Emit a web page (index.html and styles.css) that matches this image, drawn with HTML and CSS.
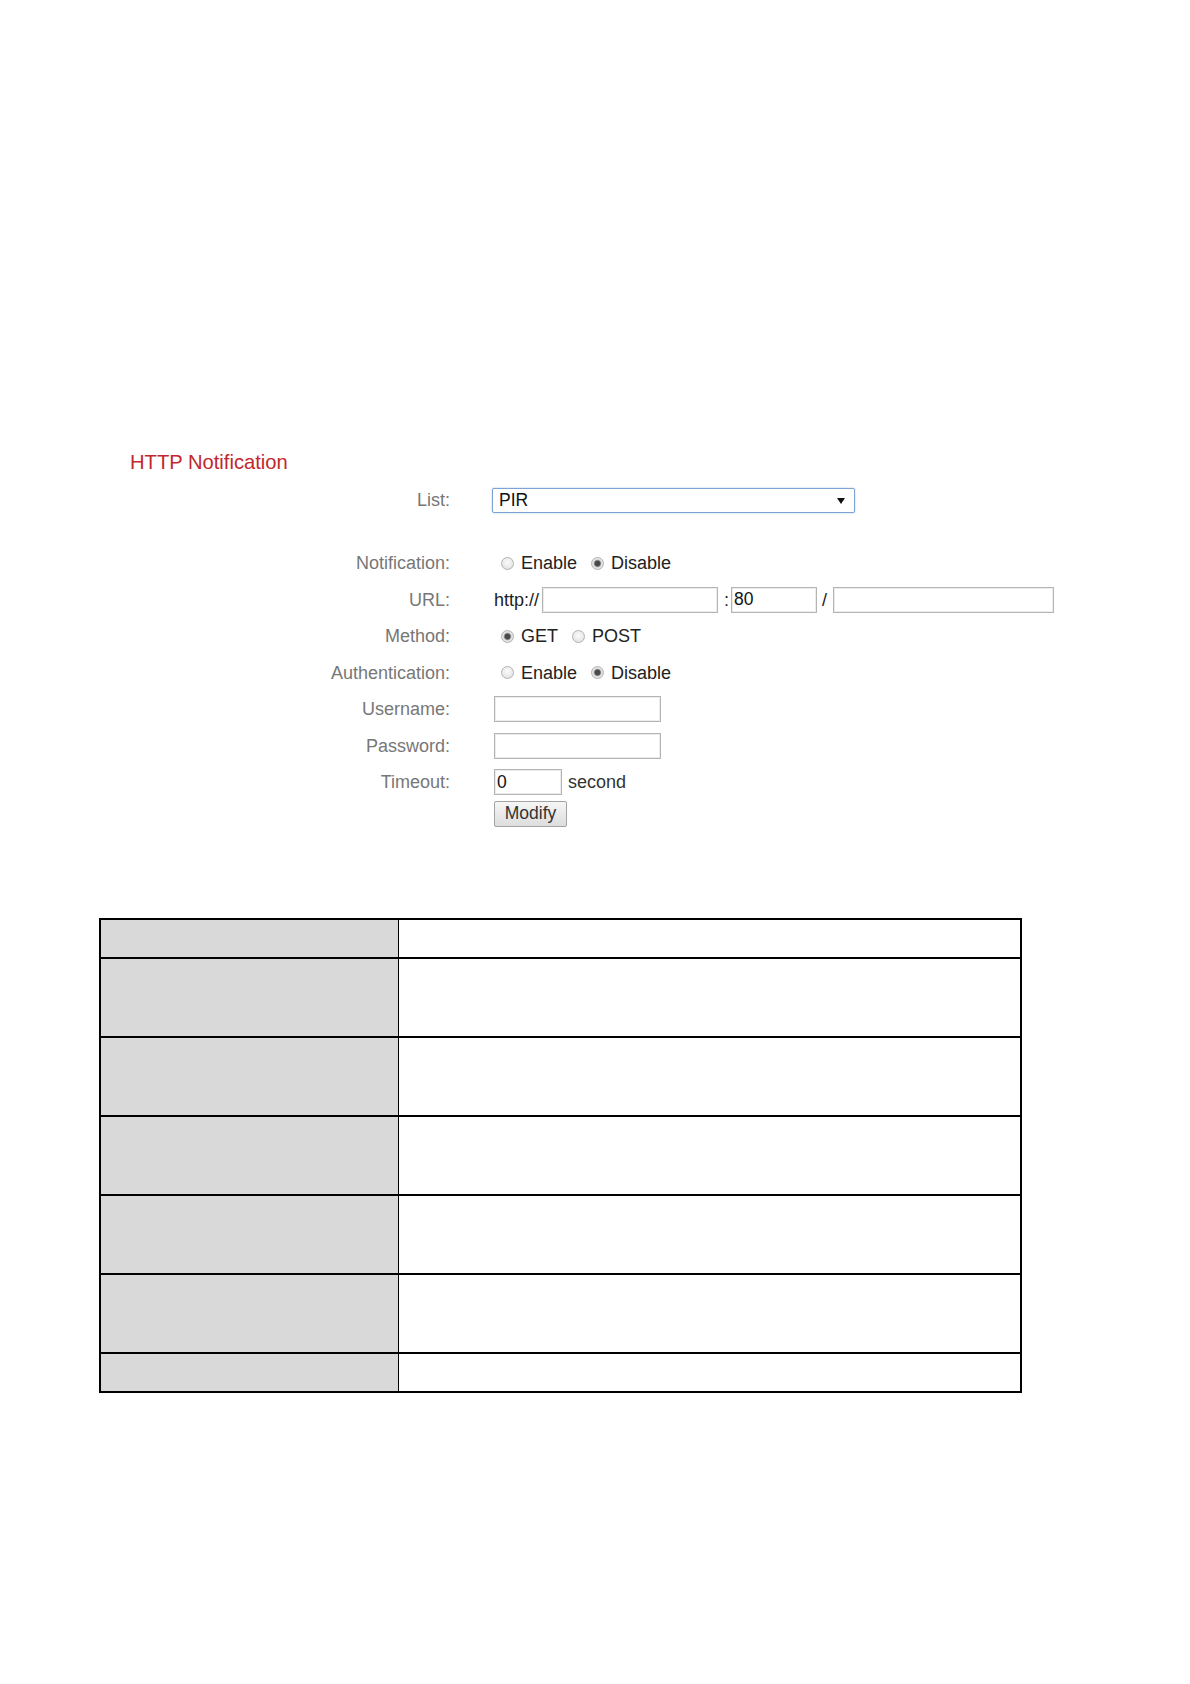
FILE: index.html
```html
<!DOCTYPE html>
<html lang="en">
<head>
<meta charset="utf-8">
<title>HTTP Notification</title>
<link rel="stylesheet" href="styles.css">
</head>
<body>
<main class="page">
  <section class="notify">
    <h2 class="notify-title">HTTP Notification</h2>
    <div class="form">
      <div class="row row-list">
        <span class="lbl">List:</span>
        <div class="val">
          <span class="select-wrap">
            <select class="select"><option>PIR</option></select>
          </span>
        </div>
      </div>

      <div class="row row-first">
        <span class="lbl">Notification:</span>
        <div class="val opts">
          <label class="opt"><input type="radio" class="radio" name="notif"> Enable</label>
          <label class="opt"><input type="radio" class="radio" name="notif" checked> Disable</label>
        </div>
      </div>

      <div class="row">
        <span class="lbl">URL:</span>
        <div class="val url">
          <span class="txt">http://</span>
          <input type="text" class="field field-host">
          <span class="txt sep-colon">:</span>
          <input type="text" class="field field-port" value="80">
          <span class="txt sep-slash">/</span>
          <input type="text" class="field field-path">
        </div>
      </div>

      <div class="row">
        <span class="lbl">Method:</span>
        <div class="val opts">
          <label class="opt"><input type="radio" class="radio" name="method" checked> GET</label>
          <label class="opt"><input type="radio" class="radio" name="method"> POST</label>
        </div>
      </div>

      <div class="row">
        <span class="lbl">Authentication:</span>
        <div class="val opts">
          <label class="opt"><input type="radio" class="radio" name="auth"> Enable</label>
          <label class="opt"><input type="radio" class="radio" name="auth" checked> Disable</label>
        </div>
      </div>

      <div class="row">
        <span class="lbl">Username:</span>
        <div class="val"><input type="text" class="field field-user"></div>
      </div>

      <div class="row">
        <span class="lbl">Password:</span>
        <div class="val"><input type="password" class="field field-user"></div>
      </div>

      <div class="row">
        <span class="lbl">Timeout:</span>
        <div class="val">
          <input type="text" class="field field-timeout" value="0">
          <span class="txt unit">second</span>
        </div>
      </div>

      <div class="row row-btn">
        <span class="lbl"></span>
        <div class="val"><button type="button" class="btn">Modify</button></div>
      </div>
    </div>
  </section>

  <table class="spec">
    <tr class="tr-s"><td class="key"></td><td class="desc"></td></tr>
    <tr class="tr-t"><td class="key"></td><td class="desc"></td></tr>
    <tr class="tr-t"><td class="key"></td><td class="desc"></td></tr>
    <tr class="tr-t"><td class="key"></td><td class="desc"></td></tr>
    <tr class="tr-t"><td class="key"></td><td class="desc"></td></tr>
    <tr class="tr-t"><td class="key"></td><td class="desc"></td></tr>
    <tr class="tr-s"><td class="key"></td><td class="desc"></td></tr>
  </table>
</main>
</body>
</html>
```

FILE: styles.css
```css
html, body {
  margin: 0;
  padding: 0;
  background: #ffffff;
}

body {
  font-family: "Liberation Sans", Arial, sans-serif;
  color: #222;
}

.page {
  padding-top: 450px;
  padding-bottom: 200px;
}

.notify-title {
  margin: 0 0 0 130px;
  font-size: 20.2px;
  line-height: 24px;
  font-weight: normal;
  color: #c1272d;
}

.form {
  display: flex;
  flex-direction: column;
}

.row {
  display: grid;
  grid-template-columns: 450px 1fr;
  column-gap: 44px;
  height: 36.5px;
  line-height: 36.5px;
  font-size: 18px;
  align-items: center;
}

.row-list {
  margin-top: 8px;
  height: 37px;
  line-height: 37px;
}

.row-first {
  margin-top: 26px;
}

.row-btn {
  height: 26px;
  line-height: 26px;
}

.lbl {
  text-align: right;
  color: #777;
  white-space: nowrap;
}

.val {
  display: flex;
  align-items: center;
  height: 100%;
  color: #222;
}

/* select */
.select-wrap {
  position: relative;
  display: inline-block;
  margin-left: -2px;
}

.select-wrap::after {
  content: "";
  position: absolute;
  right: 10px;
  top: 10px;
  border-left: 4px solid transparent;
  border-right: 4px solid transparent;
  border-top: 6px solid #111;
  pointer-events: none;
}

.select {
  appearance: none;
  -webkit-appearance: none;
  display: block;
  box-sizing: border-box;
  width: 363px;
  height: 25px;
  margin: 0;
  padding: 0 0 0 6px;
  border: 1px solid #7ea3d2;
  border-radius: 2px;
  box-shadow: 0 0 2px #a9c5ea;
  background: #fff;
  font-family: "Liberation Sans", Arial, sans-serif;
  font-size: 17.5px;
  line-height: 23px;
  color: #111;
}

/* radio options */
.opts {
  gap: 14px;
  padding-left: 7px;
}

.opt {
  display: inline-flex;
  align-items: center;
  gap: 7px;
  color: #222;
}

.radio {
  appearance: none;
  -webkit-appearance: none;
  box-sizing: border-box;
  width: 13px;
  height: 13px;
  margin: 0;
  border: 1px solid #b3b3b3;
  border-radius: 50%;
  background: radial-gradient(circle at 50% 40%, #fbfbfb 0%, #e9e9e9 60%, #d6d6d6 100%);
}

.radio:checked {
  background: radial-gradient(circle, #4a4a4a 0 2.4px, #8f8f8f 3.2px, #e4e4e4 4.2px, #dcdcdc 100%);
}

/* text inputs */
.field {
  box-sizing: border-box;
  height: 26px;
  margin: 0;
  padding: 0 2px;
  border: 1px solid #b4b4b4;
  box-shadow: inset 0 0 0 1px #ececec;
  background: #fff;
  font-family: "Liberation Sans", Arial, sans-serif;
  font-size: 17.5px;
  color: #111;
}

.field-host { width: 176px; margin-left: 3px; }
.field-port { width: 86px; }
.field-path { width: 221px; }
.field-user { width: 167px; }
.field-timeout { width: 68px; }

.url .txt { color: #222; }
.sep-colon { margin: 0 2px 0 6px; color: #777; }
.sep-slash { margin: 0 6px 0 5px; color: #777; }

.unit {
  margin-left: 6px;
  color: #333;
}

/* button */
.btn {
  box-sizing: border-box;
  width: 73px;
  height: 26px;
  margin: 0;
  padding: 0;
  border: 1px solid #a3a3a3;
  border-radius: 2px;
  background: linear-gradient(#f6f6f6, #dddddd);
  font-family: "Liberation Sans", Arial, sans-serif;
  font-size: 17.5px;
  color: #333;
}

/* table */
.spec {
  margin: 91px 0 0 99px;
  width: 923px;
  border-collapse: collapse;
  border: 2px solid #000;
}

.spec td {
  padding: 0;
  border-top: 2px solid #000;
  border-bottom: 2px solid #000;
}

.spec .key {
  width: 297px;
  background: #d9d9d9;
  border-right: 1px solid #000;
}

.spec .desc {
  background: #fff;
}

.tr-s { height: 39px; }
.tr-t { height: 79px; }
```
